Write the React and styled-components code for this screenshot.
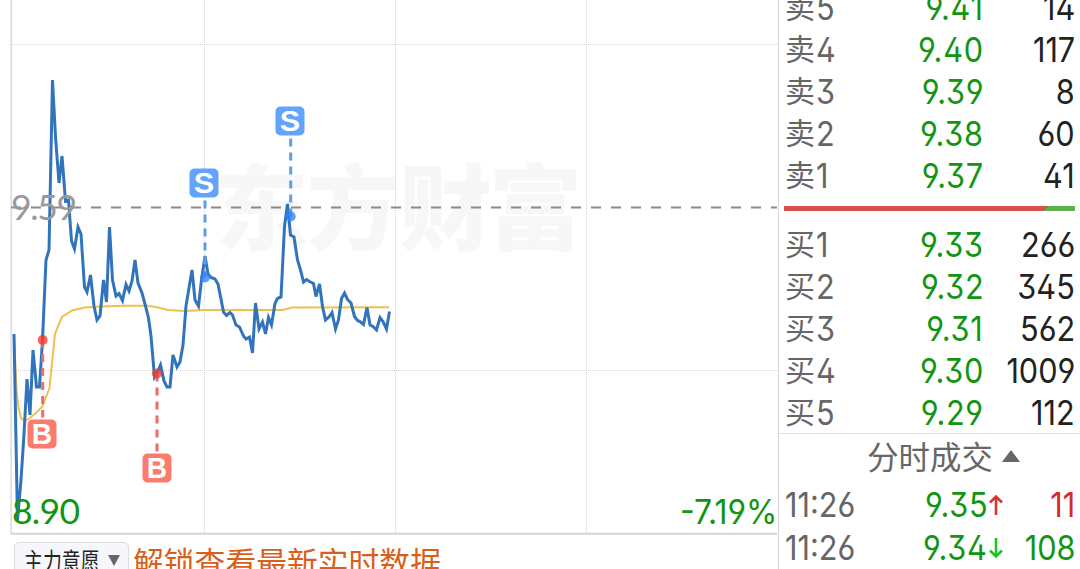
import React from 'react';
import styled, { createGlobalStyle } from 'styled-components';

const GlobalStyle = createGlobalStyle`
    body {
        margin: 0;
        background: #fff;
        overflow: hidden;
    }
`;

const numberFont = `'Inter', 'Noto Sans CJK SC', sans-serif`;
const textFont = `'Noto Sans CJK SC', sans-serif`;

const Page = styled.div`
    display: flex;
    width: 1080px;
    height: 569px;
    overflow: hidden;
    background: #fff;
    font-family: ${numberFont};
    font-feature-settings: 'cv03', 'cv04', 'cv09', 'ss01';
`;

const ChartColumn = styled.div`
    width: 778px;
    flex: none;
`;

const ChartSvg = styled.svg`
    display: block;
`;

const Footer = styled.div`
    display: flex;
    align-items: flex-start;
    padding-left: 14px;
    padding-top: 5px;
`;

const Picker = styled.div`
    display: flex;
    align-items: center;
    box-sizing: border-box;
    width: 115px;
    height: 40px;
    padding: 0 8px 4px 9px;
    border: 1px solid #dcdde2;
    border-radius: 5px;
    background: #f6f7fb;
    justify-content: space-between;
`;

const PickerText = styled.span`
    width: 76px;
    font: 25px/34px ${textFont};
    color: #222;
    white-space: nowrap;
    transform: scaleX(0.755);
    transform-origin: left;
`;

const Triangle = styled.i`
    width: 0;
    height: 0;
    border: ${p => p.$half}px solid transparent;
    border-${p => (p.$up ? 'bottom' : 'top')}: ${p => p.$size}px solid #666;
    border-${p => (p.$up ? 'top' : 'bottom')}: 0;
`;

const Unlock = styled.div`
    margin-left: 4px;
    font: 30.8px/37px ${textFont};
    color: #d9601a;
    white-space: nowrap;
`;

const Quotes = styled.div`
    flex: 1;
    box-sizing: border-box;
    border-left: 1px solid #d6d6d6;
    overflow: hidden;
`;

const Book = styled.div`
    padding: 0 5px 0 6px;
    margin-top: ${p => p.$top}px;
`;

const Row = styled.div`
    display: flex;
    height: ${p => p.$height || 42}px;
    line-height: 42px;
    font-size: 33.5px;
    white-space: nowrap;
`;

const Label = styled.div`
    width: 93px;
    color: #666;
`;

const Hanzi = styled.span`
    font: 30px/30px ${textFont};
    vertical-align: 2px;
    margin-right: 1px;
`;

const Digits = styled.span`
    display: inline-block;
    transform: scaleX(0.915);
    transform-origin: ${p => p.$from || 'right'};
`;

const Price = styled.div`
    width: ${p => p.$width || 106}px;
    margin-right: -1px;
    text-align: right;
    letter-spacing: 0.8px;
    color: #129512;
`;

const Volume = styled.div`
    flex: 1;
    text-align: right;
    color: ${p => p.$color || '#222'};
`;

const Ratio = styled.div`
    height: 5px;
    margin: 9px 5px 0;
    background: linear-gradient(135deg, #d64f4d calc(100% - 22px), #5caf4b calc(100% - 22px));
`;

const TradesTitle = styled.div`
    display: flex;
    align-items: center;
    justify-content: center;
    gap: 9px;
    box-sizing: border-box;
    height: 49px;
    margin-top: -1px;
    padding: 0 0 5px 28px;
    border-top: 1px solid #e2e2e2;
    font: 31.4px/43px ${textFont};
    color: #666;
`;

const Arrow = styled.svg`
    flex: none;
    width: 16px;
    height: 22px;
    margin-top: 10px;
    margin-left: 1px;
`;

const sells = [
    ['5', '9.41', '14'],
    ['4', '9.40', '117'],
    ['3', '9.39', '8'],
    ['2', '9.38', '60'],
    ['1', '9.37', '41'],
];

const buys = [
    ['1', '9.33', '266'],
    ['2', '9.32', '345'],
    ['3', '9.31', '562'],
    ['4', '9.30', '1009'],
    ['5', '9.29', '112'],
];

const trades = [
    { time: '11:26', price: '9.35', up: true, volume: '11' },
    { time: '11:26', price: '9.34', up: false, volume: '108' },
];

const priceLine = `14,334 17.5,520 21,480 24,434 27,379 30,415 33,350 36.5,387 39.5,387 42.5,340 46,260
    49,250 52.5,80 55.5,137 59,183 62,156 65.5,201 68.5,200 71.5,241 74.5,249 78,227 81,234 84.5,287
    87,292 90.5,275 94,306 97,320 100,316 103.5,280 106.5,302 109.5,227 112.5,280 116,296 119,293.5
    122.5,300.5 126,284.5 129,291 132,281 135,260 138,283 142,293 145.5,306 148.5,318 151,336 154.5,377
    157.5,372 160.5,365 164,381 167,387 170,387 173,355 177,367 180,362 183,345 186,306 192,270
    195,300 198.5,306 201.5,280 205,256 208,274 211,277.5 215,279 218,284 221,299 223.5,312 226.5,315.5
    230,312.5 232.5,315 236,325 239.5,327 243.5,336 246,339 249.5,337 252.5,353 255.5,303 259,329
    262.5,322 265.5,334 268.5,317.5 271.5,325 275,303.5 277.5,298.5 281,297 284.5,226.5 287.5,204
    290.5,235 294,237 297.5,260 300.5,270 303.5,282 306.5,279.5 309.5,281.5 313.5,283.5 316,296.5
    319.5,284 322.5,306.5 325.5,320 329,317 332,312.5 335.5,329 338.5,320 341.5,298.5 344.5,293
    347.5,299.5 351,303 354.5,316.5 357.5,320.5 360,321.5 363.5,324.5 367,307.5 370,325 373,326.5
    376.5,330 380,317.5 383,321.5 386.5,329 389.5,311.5`;

const averageLine = `14,334 16.5,390 18.5,408 21,418 25,421 30,418 38,411 42,407 46,397 49.5,388 52,363
    55,334 58.5,325 62,317 72,310.5 85,307.5 100,306.5 125,305.7 148,305.7 158,307.5 168,310 185,311
    205,310 283,310 292,307.5 389,307.3`;

// y is the top of the badge, dot is where the deal sits on the line
const marks = [
    { type: 'B', x: 42, y: 419.5, dotX: 42.7, dot: 340 },
    { type: 'B', x: 157, y: 453.5, dotX: 157, dot: 373.5 },
    { type: 'S', x: 204, y: 168.5, dotX: 205, dot: 277.5 },
    { type: 'S', x: 290, y: 106.5, dotX: 290.7, dot: 216.5 },
];

function Mark({ type, x, y, dotX, dot }) {
    const buy = type === 'B';
    const color = buy ? '#fb7c6c' : '#62a3fb';
    return (
        <g>
            <line
                x1={dotX} x2={dotX}
                y1={buy ? dot : y + 32} y2={buy ? y - 2 : dot}
                stroke={buy ? '#ee6d67' : '#5c9ee9'} strokeWidth="3"
                strokeDasharray="8 6"
            />
            <circle cx={dotX} cy={dot} r="5" fill={buy ? '#f4382f' : '#2b83fb'} fillOpacity="0.78"/>
            <rect x={x - 14.5} y={y} width="29" height="29" rx="5" fill={color}/>
            <text
                x={x - 10.2} y={y + 24.8} textLength="20.4" lengthAdjust="spacingAndGlyphs"
                fontFamily="Liberation Sans" fontSize="29.5" fontWeight="700" fill="#fff"
            >{type}</text>
        </g>
    );
}

function Chart() {
    return (
        <ChartSvg width="778" height="537" viewBox="0 0 778 537">
            <g fontFamily="Noto Sans CJK SC" fontWeight="900" fontSize="93" fill="#f7f7f7">
                <text x="215" y="243">东</text>
                <text x="307" y="243">方</text>
                <text x="399" y="243">财</text>
                <text x="489" y="243">富</text>
            </g>
            <g stroke="#d4d4d4" strokeWidth="1" strokeDasharray="1 1">
                <path d="M204.5 0V533M395.5 0V533M586.5 0V533M12 44.5H777M12 370.5H777"/>
            </g>
            <path d="M11.2 0V534" stroke="#e0e0e0" strokeWidth="1.8"/>
            <path d="M10.5 533.7H777" stroke="#d6d6d6" strokeWidth="2"/>
            <path d="M11 207.5H777" stroke="#8a8a8a" strokeWidth="2" strokeDasharray="10 10"/>
            <polyline points={averageLine} fill="none" stroke="#eec04f" strokeWidth="2"/>
            <polyline points={priceLine} fill="none" stroke="#3274bb" strokeWidth="3"/>
            {marks.map(m => <Mark key={m.type + m.x} {...m}/>)}
            <g fontSize="35.5" fontFamily="Lato">
                <text x="11" y="220" textLength="66" fill="#999">9.59</text>
                <text x="12" y="524" textLength="68" fill="#129512">8.90</text>
            </g>
            <text
                x="680" y="524" fontSize="34" fill="#129512"
                textLength="97.5" lengthAdjust="spacingAndGlyphs"
            >-7.19%</text>
        </ChartSvg>
    );
}

function BookRows({ side, rows }) {
    return rows.map(([level, price, volume]) => (
        <Row key={level}>
            <Label><Hanzi>{side}</Hanzi><Digits $from="left">{level}</Digits></Label>
            <Price><Digits>{price}</Digits></Price>
            <Volume><Digits>{volume}</Digits></Volume>
        </Row>
    ));
}

export default function App() {
    return (
        <Page>
            <GlobalStyle/>
            <ChartColumn>
                <Chart/>
                <Footer>
                    <Picker>
                        <PickerText>主力意愿</PickerText>
                        <Triangle $half={6.5} $size={11}/>
                    </Picker>
                    <Unlock>解锁查看最新实时数据</Unlock>
                </Footer>
            </ChartColumn>
            <Quotes>
                <Book $top={-13}>
                    <BookRows side="卖" rows={sells}/>
                </Book>
                <Ratio/>
                <Book $top={13}>
                    <BookRows side="买" rows={buys}/>
                </Book>
                <TradesTitle>
                    分时成交
                    <Triangle $up $half={9} $size={12}/>
                </TradesTitle>
                <Book $top={2}>
                    {trades.map(t => (
                        <Row key={t.price} $height={43}>
                            <Label><Digits $from="left">{t.time}</Digits></Label>
                            <Price $width={110}><Digits>{t.price}</Digits></Price>
                            <Arrow viewBox="0 0 16 22" fill="none" stroke={t.up ? '#d93434' : '#1fc41f'} strokeWidth="2.6">
                                <path d={t.up ? 'M8 21V2M2 8.5L8 2.5L14 8.5' : 'M8 1V20M2 13.5L8 19.5L14 13.5'}/>
                            </Arrow>
                            <Volume $color={t.up ? '#d42a2a' : '#129512'}><Digits>{t.volume}</Digits></Volume>
                        </Row>
                    ))}
                </Book>
            </Quotes>
        </Page>
    );
}
